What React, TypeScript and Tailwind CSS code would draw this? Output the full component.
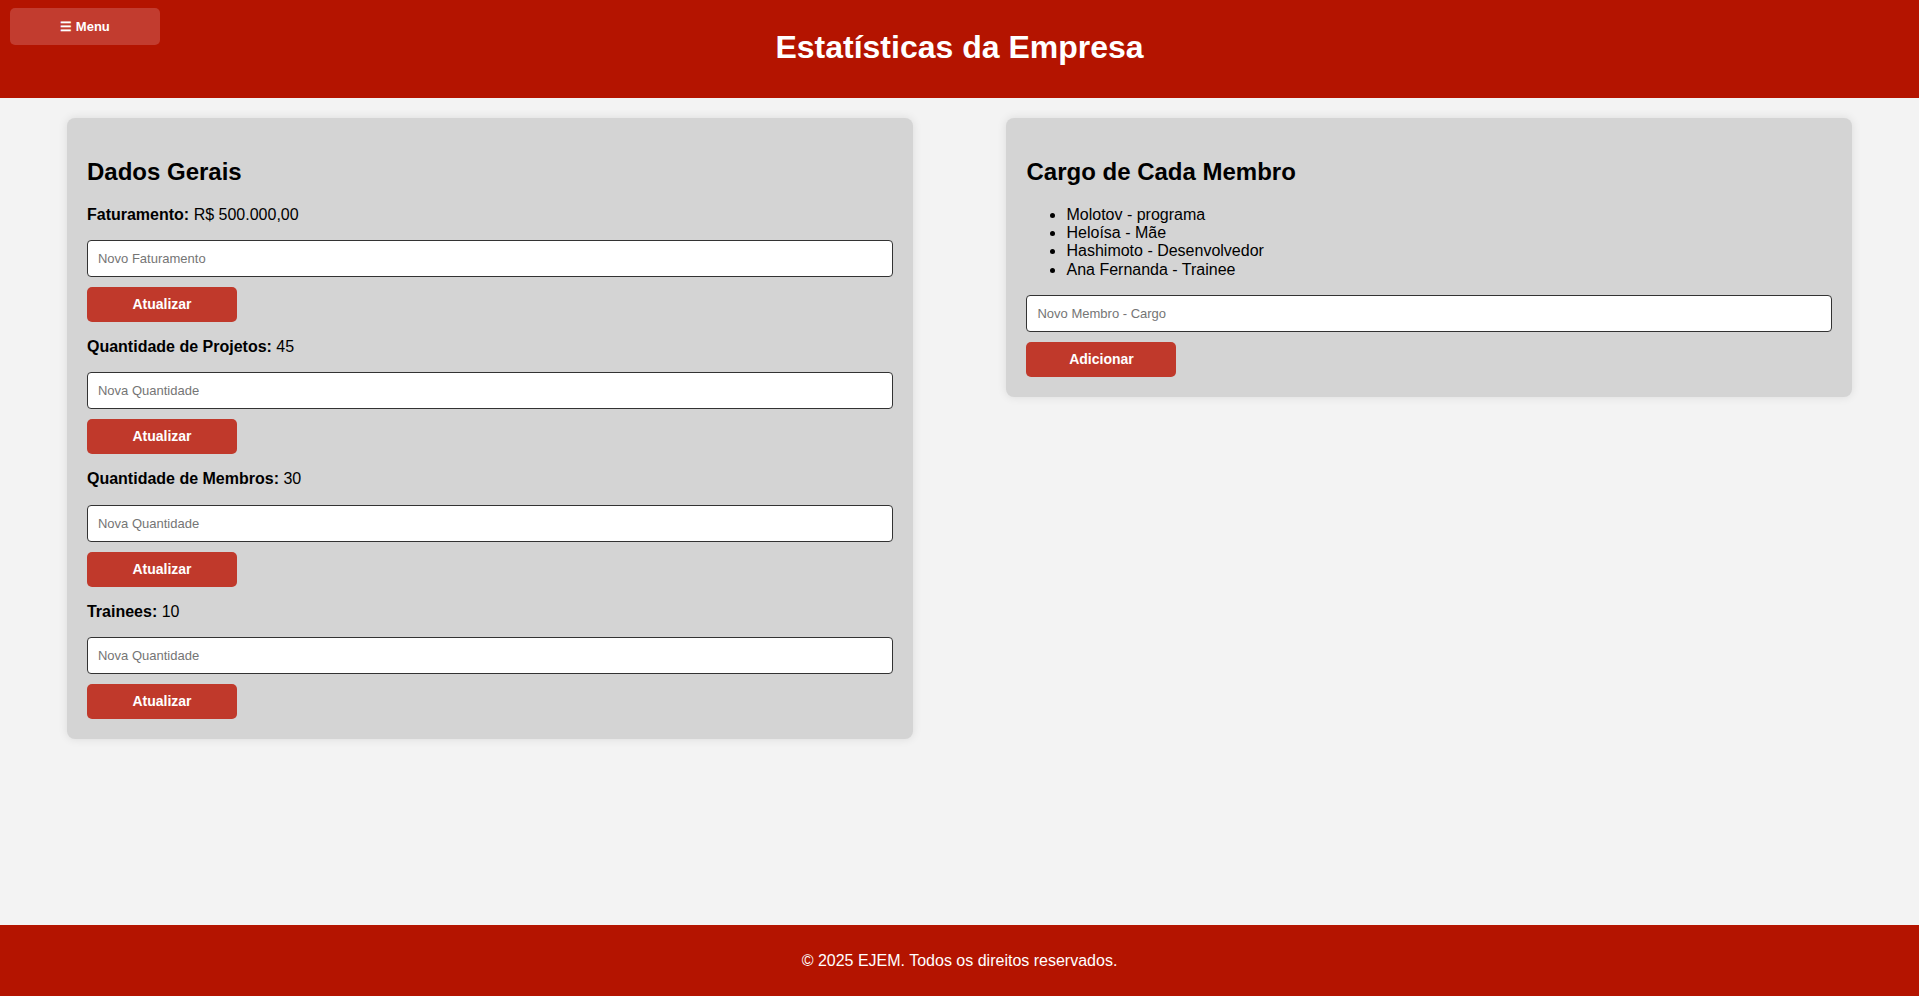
import { useState } from 'react';

const initialStats = [
  { label: 'Faturamento:', value: 'R$ 500.000,00', placeholder: 'Novo Faturamento' },
  { label: 'Quantidade de Projetos:', value: '45', placeholder: 'Nova Quantidade' },
  { label: 'Quantidade de Membros:', value: '30', placeholder: 'Nova Quantidade' },
  { label: 'Trainees:', value: '10', placeholder: 'Nova Quantidade' },
];

const initialMembers = [
  'Molotov - programa',
  'Heloísa - Mãe',
  'Hashimoto - Desenvolvedor',
  'Ana Fernanda - Trainee',
];

function RedButton({ children, onClick }: { children: string; onClick?: () => void }) {
  return (
    <button
      onClick={onClick}
      className="w-[150px] h-[35px] rounded-[5px] bg-[#c0392b] text-white text-[14px] font-bold cursor-pointer"
    >
      {children}
    </button>
  );
}

function TextInput({ placeholder, value, onChange }: { placeholder: string; value: string; onChange: (v: string) => void }) {
  return (
    <input
      type="text"
      placeholder={placeholder}
      value={value}
      onChange={(e) => onChange(e.target.value)}
      className="block w-full h-[37px] px-[10px] mb-[10px] bg-white border border-[#333] rounded-[4px] text-[13px] text-black placeholder:text-[#757575] outline-none"
    />
  );
}

export default function App() {
  const [stats, setStats] = useState(initialStats);
  const [drafts, setDrafts] = useState(['', '', '', '']);
  const [members, setMembers] = useState(initialMembers);
  const [newMember, setNewMember] = useState('');

  const update = (i: number) => {
    if (!drafts[i].trim()) return;
    setStats(stats.map((s, idx) => (idx === i ? { ...s, value: drafts[i] } : s)));
    setDrafts(drafts.map((d, idx) => (idx === i ? '' : d)));
  };

  const addMember = () => {
    if (!newMember.trim()) return;
    setMembers([...members, newMember]);
    setNewMember('');
  };

  return (
    <div className="min-h-screen flex flex-col bg-[#f3f3f3] text-black font-['Liberation_Sans',Arial,sans-serif]">
      <header className="relative h-[98px] bg-[#b41400] text-white">
        <button className="absolute left-[10px] top-[8px] w-[150px] h-[37px] rounded-[5px] bg-[#c23c2f] text-white text-[13px] font-bold">
          ☰ Menu
        </button>
        <h1 className="pt-[29px] text-center text-[32px] leading-[37px] font-bold">Estatísticas da Empresa</h1>
      </header>

      <main className="flex-1 flex justify-around items-start px-[20px] pt-[20px]">
        <section className="w-[45%] bg-[#d4d4d4] rounded-[8px] p-[20px] shadow-[0_0_10px_rgba(0,0,0,0.1)]">
          <h2 className="mt-[20px] mb-[20px] text-[24px] leading-[27.6px] font-bold">Dados Gerais</h2>
          {stats.map((s, i) => (
            <div key={i}>
              <p className={`${i === 0 ? 'mt-0' : 'mt-[16px]'} mb-[16px] text-[16px] leading-[18.4px]`}>
                <strong>{s.label}</strong> {s.value}
              </p>
              <TextInput
                placeholder={s.placeholder}
                value={drafts[i]}
                onChange={(v) => setDrafts(drafts.map((d, idx) => (idx === i ? v : d)))}
              />
              <RedButton onClick={() => update(i)}>Atualizar</RedButton>
            </div>
          ))}
        </section>

        <section className="w-[45%] bg-[#d4d4d4] rounded-[8px] p-[20px] shadow-[0_0_10px_rgba(0,0,0,0.1)]">
          <h2 className="mt-[20px] mb-[20px] text-[24px] leading-[27.6px] font-bold">Cargo de Cada Membro</h2>
          <ul className="list-disc pl-[40px] mb-[16px] text-[16px] leading-[18.4px]">
            {members.map((m, i) => (
              <li key={i}>{m}</li>
            ))}
          </ul>
          <TextInput placeholder="Novo Membro - Cargo" value={newMember} onChange={setNewMember} />
          <RedButton onClick={addMember}>Adicionar</RedButton>
        </section>
      </main>

      <footer className="h-[71px] flex items-center justify-center bg-[#b41400] text-white text-[16px]">
        © 2025 EJEM. Todos os direitos reservados.
      </footer>
    </div>
  );
}
